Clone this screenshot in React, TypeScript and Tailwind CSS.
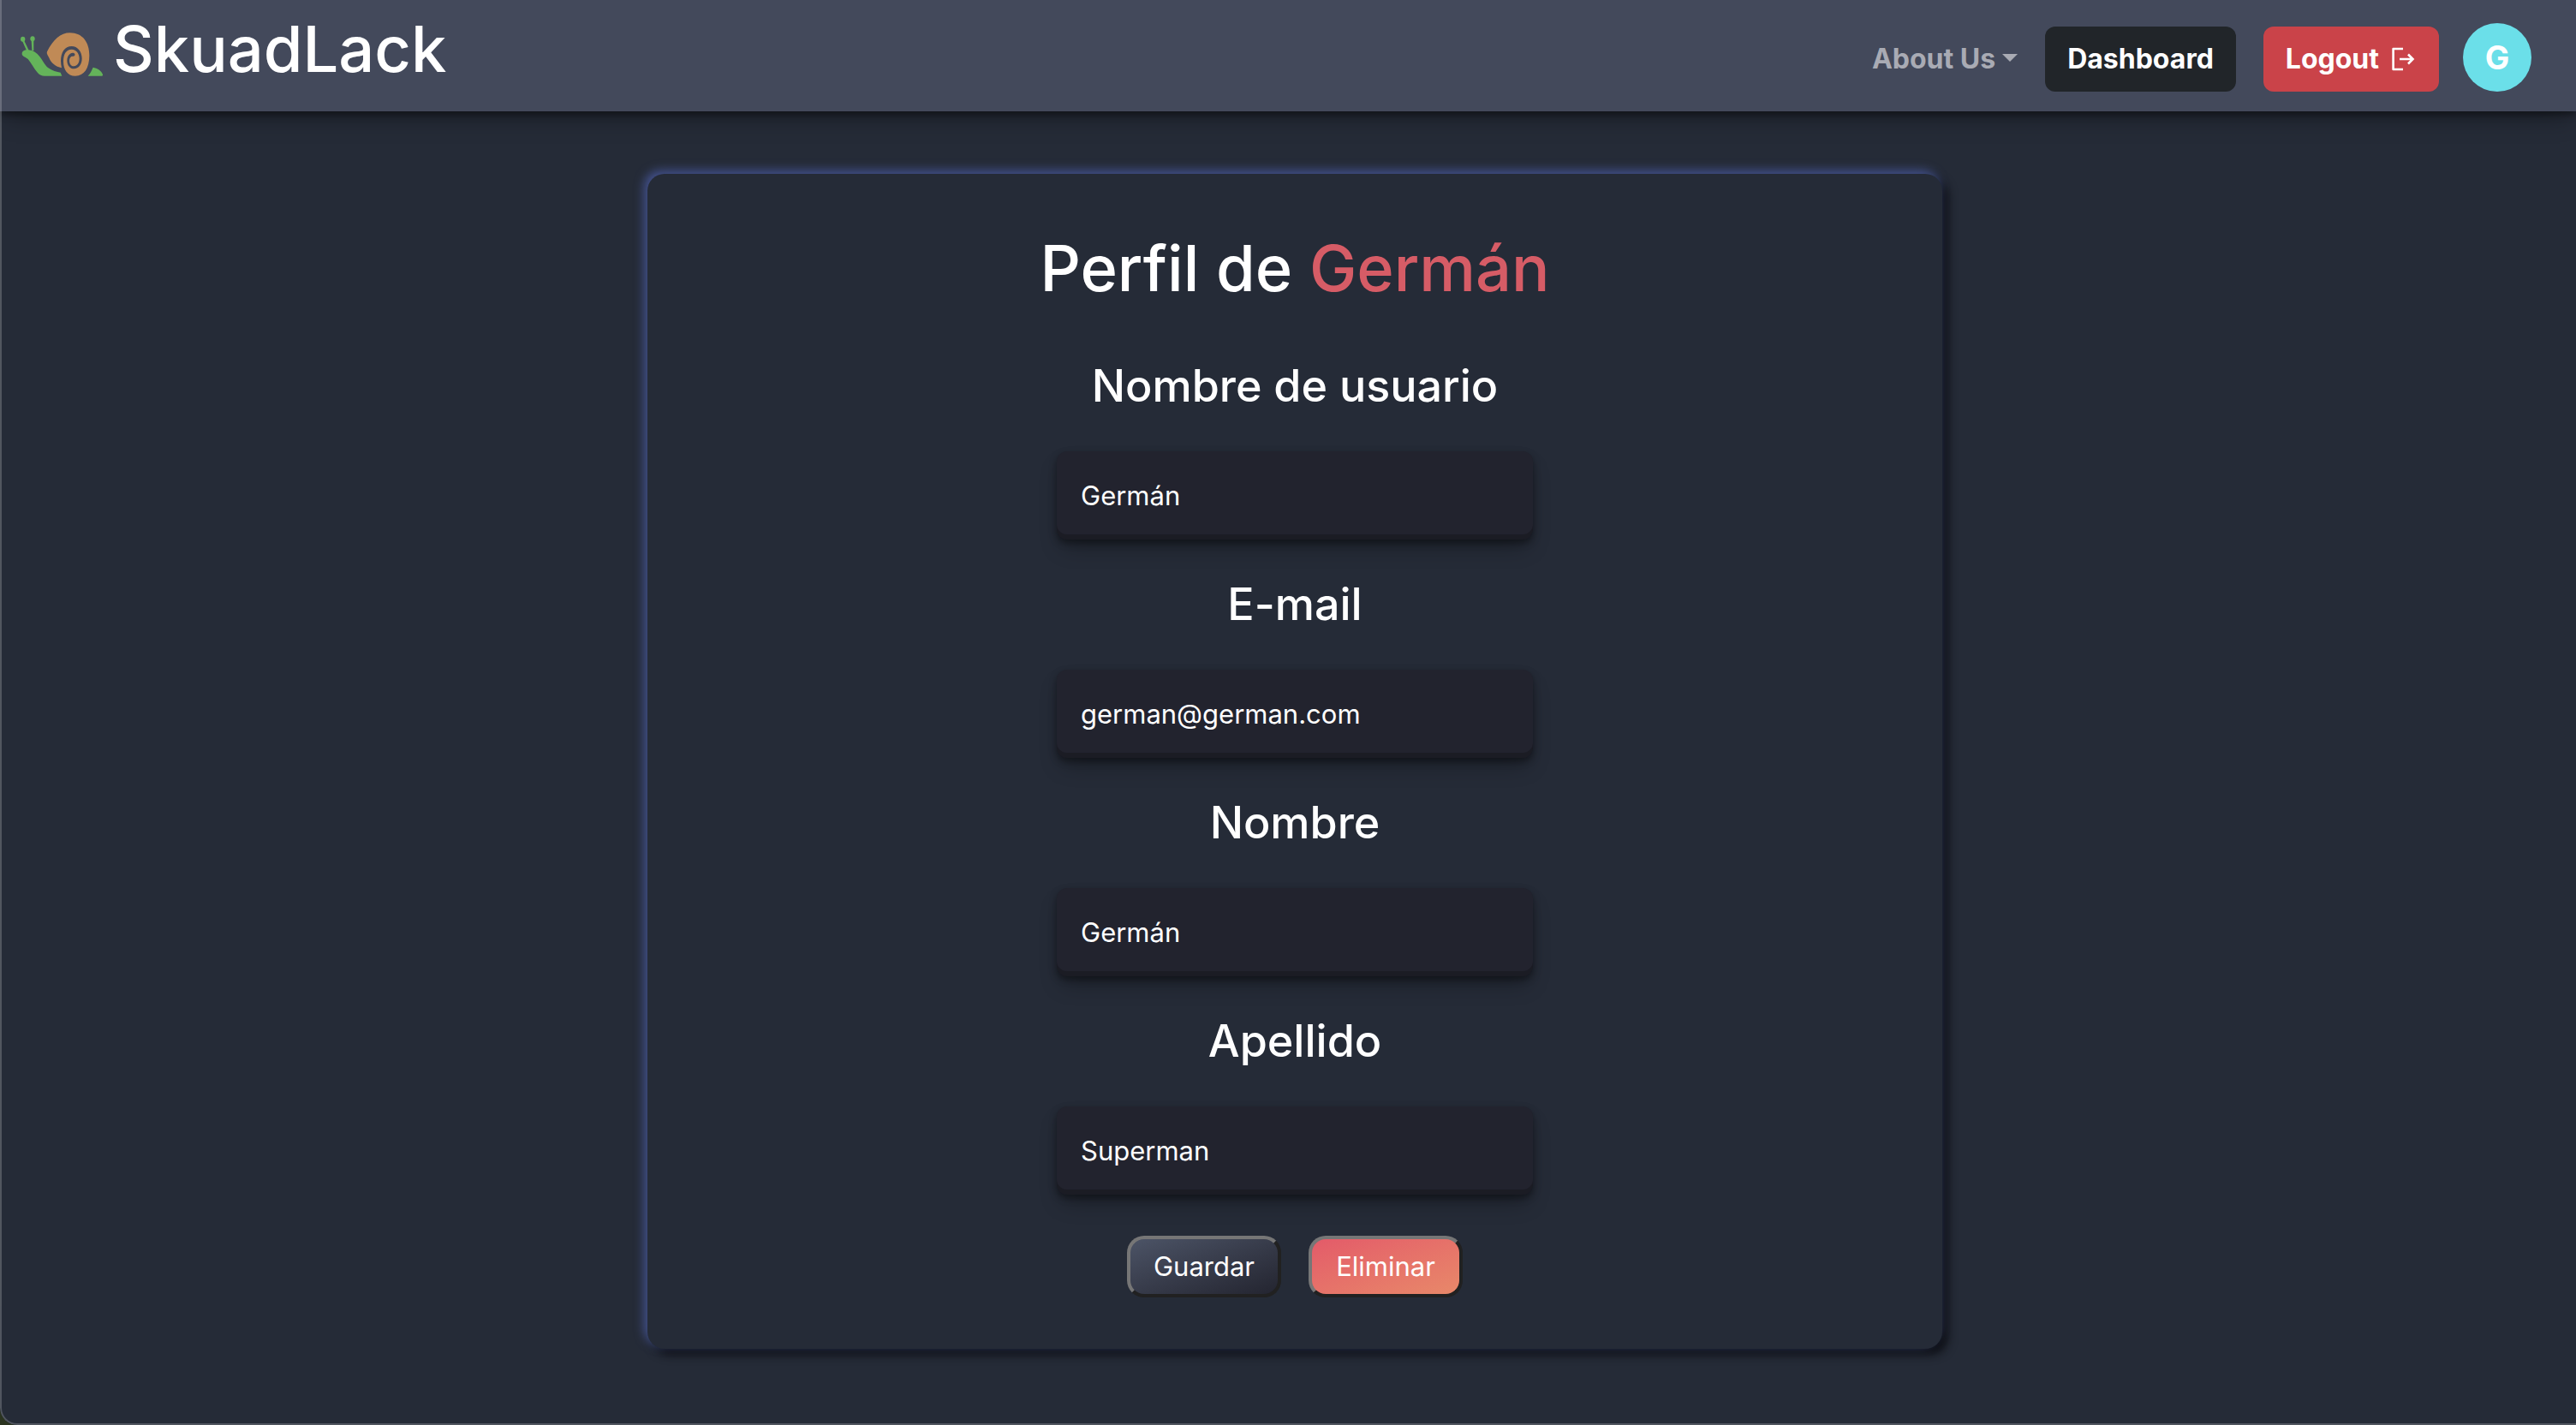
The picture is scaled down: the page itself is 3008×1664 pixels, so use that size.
const fields = [
  { id: "username", label: "Nombre de usuario", value: "Germán", type: "text" },
  { id: "email", label: "E-mail", value: "german@german.com", type: "email" },
  { id: "name", label: "Nombre", value: "Germán", type: "text" },
  { id: "surname", label: "Apellido", value: "Superman", type: "text" },
];

function Snail() {
  return (
    <svg viewBox="72 55 288 153" className="mt-3 h-[51px] w-24" aria-hidden="true">
      <g fill="#64b35a">
        <ellipse cx="80" cy="78" rx="8" ry="9" />
        <ellipse cx="114" cy="77" rx="8" ry="9" />
        <path d="M78 84 L94 120 L101 117 L84 82 Z M110 84 L112 119 L118 119 L118 84 Z" />
        <path d="M77 130 C77 121 84 116 95 116 C108 116 120 120 130 129 C146 144 154 166 168 178 C182 188 200 194 212 195 L217 207 L156 207 C146 207 139 204 132 196 C118 180 110 162 98 148 C90 141 77 139 77 130 Z" />
        <path d="M308 207 C318 198 321 186 326 177 C340 180 356 188 360 202 Q361 207 356 207 Z" />
      </g>
      <path
        fill="#c08a56"
        d="M165 122 C186 80 212 56 245 56 C290 56 313 90 313 135 C313 180 294 207 264 207 C236 207 222 184 222 156 C222 130 232 114 251 114 C268 114 278 130 278 146 C278 162 270 173 259 173 C249 173 243 164 243 153 C243 144 248 138 254 138 C260 139 264 135 262 130 C259 125 251 126 246 129 C238 134 235 143 235 153 C235 169 245 182 259 182 C276 182 287 166 287 146 C287 122 272 103 251 103 C227 103 213 125 213 154 Q213 166 216 179 C195 175 178 160 173 146 C169 136 162 130 165 122 Z"
      />
    </svg>
  );
}

function LogoutIcon() {
  return (
    <svg viewBox="0 0 32 32" className="size-8" fill="none" stroke="currentColor" strokeWidth="2.6" aria-hidden="true">
      <path d="M16 4 H4.6 V28 H16" strokeLinejoin="round" />
      <path d="M12 16 H28 M22 10.5 L27.5 16 L22 21.5" />
    </svg>
  );
}

export default function App() {
  return (
    <div className="bg-[#2b3420]">
      <div className="relative flex min-h-screen flex-col overflow-hidden rounded-bl-[20px] bg-[#252b37] font-['Inter',sans-serif] text-white">
        <header className="flex h-[130px] items-center justify-between bg-[#43495b] pr-[52px] pl-6 shadow-[0_4px_8px_rgba(0,0,0,0.4),0_14px_26px_-6px_rgba(0,0,0,0.3)]">
          <a href="#" className="flex items-center gap-3 pb-4 text-[74px] leading-none font-medium">
            <Snail />
            SkuadLack
          </a>
          <nav className="flex items-center pt-2 text-[32px] font-bold">
            <button type="button" className="flex items-center gap-2 text-[#a9abb4]">
              About Us
              <span className="mb-1 border-x-9 border-t-9 border-x-transparent border-t-[#a9abb4]" />
            </button>
            <a href="#" className="ml-8 flex h-[76px] items-center rounded-xl bg-[#212529] px-[26px]">
              Dashboard
            </a>
            <button type="button" className="ml-8 flex h-[76px] items-center gap-3 rounded-xl bg-[#ca4349] px-[26px]">
              Logout
              <LogoutIcon />
            </button>
            <div className="mb-1 ml-7 flex size-20 items-center justify-center rounded-full bg-[#6bdfe9] text-[38px]">G</div>
          </nav>
        </header>

        <main className="flex justify-center pt-[73px] pb-20 pl-4">
          <form className="flex w-full max-w-[1512px] flex-col items-center rounded-[20px] bg-[#252b37] pt-[62px] pb-[60px] shadow-[-4px_-4px_12px_#44538f,6px_6px_12px_#0b0c10]">
            <h1 className="text-[74px] leading-24 font-medium">
              Perfil de <span className="text-[#d65c66]">Germán</span>
            </h1>
            <div className="mt-14 flex flex-col gap-[42px]">
              {fields.map((field) => (
                <div key={field.id} className="flex flex-col items-center">
                  <label htmlFor={field.id} className="text-[52px] leading-[68px] font-medium">
                    {field.label}
                  </label>
                  <input
                    id={field.id}
                    type={field.type}
                    defaultValue={field.value}
                    className="mt-[42px] h-[103px] w-[556px] rounded-xl bg-[#22232e] px-7 text-[31px] shadow-[0_4px_8px_rgba(0,0,0,0.4),0_14px_26px_-6px_rgba(0,0,0,0.3),inset_0_-6px_0_rgba(0,0,0,0.2)] outline-none"
                  />
                </div>
              ))}
            </div>
            <div className="mt-12 flex gap-8 text-[31px]">
              <button type="submit" className="h-[72px] w-[180px] rounded-[20px] border-4 border-t-[#767676] border-r-[#212121] border-b-[#212121] border-l-[#767676] bg-linear-160 from-[#4e5669] to-[#22232e] bg-origin-border">
                Guardar
              </button>
              <button type="button" className="h-[72px] w-[180px] rounded-[20px] border-4 border-t-[#767676] border-r-[#212121] border-b-[#212121] border-l-[#767676] bg-linear-160 from-[#e35869] to-[#e88a69] bg-origin-border">
                Eliminar
              </button>
            </div>
          </form>
        </main>
        <div className="pointer-events-none absolute inset-0 rounded-bl-[20px] border-b-2 border-l-2 border-white/20" />
      </div>
    </div>
  );
}
